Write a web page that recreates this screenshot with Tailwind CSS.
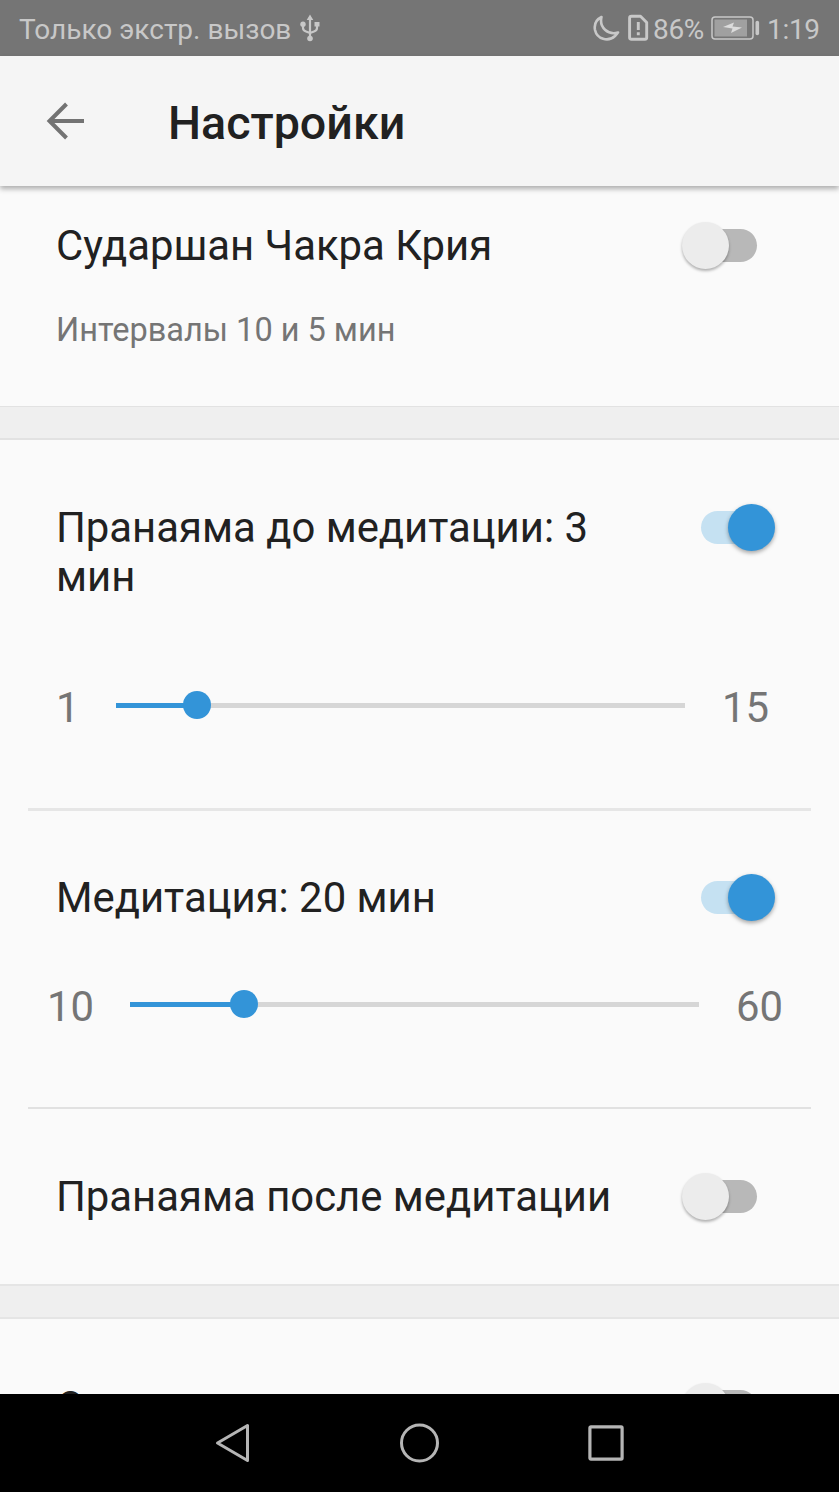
<!DOCTYPE html>
<html lang="ru">
<head>
    <meta charset="UTF-8">
    <meta name="viewport" content="width=device-width, initial-scale=1.0">
    <script src="https://cdn.jsdelivr.net/npm/@tailwindcss/browser@4"></script>
    <title>Настройки</title>
</head>
<body class="bg-black">
    <div class="w-[839px] h-[1492px] flex flex-col overflow-hidden bg-[#fafafa] font-['Roboto','Liberation_Sans',sans-serif] text-[41.85px] leading-[49px] text-[#212121]">

        <!-- Status bar -->
        <div class="h-14 shrink-0 flex items-center bg-[#757575] pl-[19px] pr-[19px] text-[28px] leading-8 text-[#c8c8c8]">
            <span class="w-[273px] pt-[3px] whitespace-nowrap">Только экстр. вызов</span>
            <svg class="w-[20px] h-[28px] ml-[8px]" viewBox="0 0 20 28" fill="none" stroke="currentColor" stroke-width="2.2">
                <path d="M10 4v20M3 10v4q0 2.500 3 3.500l4 1.500M17 10v4q0 2.500-3 3.500l-4 1.500"/>
                <path d="M10 .5l3.300 5.500H6.700zM14.500 8h5v4.500h-5z" fill="currentColor" stroke="none"/>
                <circle cx="3" cy="10.300" r="2.700" fill="currentColor" stroke="none"/>
                <circle cx="10" cy="24.500" r="2.800" fill="currentColor" stroke="none"/>
            </svg>
            <div class="ml-auto flex items-center">
                <svg class="w-[28px] h-[28px]" viewBox="0 0 28 28" fill="none" stroke="currentColor" stroke-width="2.600" stroke-linejoin="round">
                    <path d="M8.500 3C3.500 5.500 1 10.500 2 16C4 25 15 28.500 22 22C23.500 20.500 24.500 19.500 25 18.500C15 21.500 6 13.500 8.500 3Z"/>
                </svg>
                <svg class="w-[21px] h-[28px] ml-[7px]" viewBox="0 0 21 28" fill="none" stroke="currentColor" stroke-width="2.900" stroke-linejoin="round">
                    <path d="M3.500 2.300H12.500L18.700 8.500V23.500Q18.700 25.200 17 25.200H3.500Q1.600 25.200 1.600 23.500V4Q1.600 2.300 3.500 2.300Z"/>
                    <path d="M10.300 8v8M10.300 18.300v3"/>
                </svg>
                <span class="w-[51px] ml-[4px] pt-[3px] whitespace-nowrap tracking-[-0.3px]">86%</span>
                <svg class="w-[49px] h-[24px] ml-[7px]" viewBox="0 0 49 24">
                    <rect x="1" y="1" width="41" height="22" rx="3" fill="none" stroke="#c8c8c8" stroke-width="1.500"/>
                    <rect x="3.500" y="3.500" width="32.500" height="17" fill="#a0a0a0"/>
                    <path d="M12 11l11-4.500-1.500 4 9.500 1-11 5.500 1.500-4.500z" fill="#dcdcdc"/>
                    <path d="M46.300 6.500v11" stroke="#c8c8c8" stroke-width="3.600" stroke-linecap="round"/>
                </svg>
                <span class="w-[53px] ml-[7px] pt-[3px] whitespace-nowrap tracking-[-0.3px]">1:19</span>
            </div>
        </div>

        <!-- App bar -->
        <div class="relative h-[130px] shrink-0 flex items-center bg-[#f5f5f5] pl-[46px] shadow-[0_3px_5px_rgba(0,0,0,0.3)]">
            <svg class="w-[38px] h-[38px]" viewBox="0 0 38 38" fill="none" stroke="#737373" stroke-width="4">
                <path d="M38 19H4M20.500 2L3.500 19L20.500 36"/>
            </svg>
            <h1 class="ml-[84px] pt-[3px] text-[46.600px] leading-[54px] font-medium">Настройки</h1>
        </div>

        <!-- Sudarshan Kriya -->
        <section class="h-[220px] shrink-0 pt-[35px] pl-14 pr-16">
            <div class="flex justify-between">
                <h2>Сударшан Чакра Крия</h2>
                <div class="relative w-[93px] h-[49px] flex items-center justify-center">
                    <div class="w-14 h-[33px] rounded-full bg-[#b8b8b8]"></div>
                    <div class="absolute left-0 top-px size-[47px] rounded-full bg-[#ececec] shadow-[0_2px_3px_rgba(0,0,0,0.3)]"></div>
                </div>
            </div>
            <p class="mt-[41px] text-[32.500px] leading-[38px] text-[#757575]">Интервалы 10 и 5 мин</p>
        </section>

        <div class="h-[34px] shrink-0 bg-[#efefef] border-t border-b-2 border-[#e2e2e2]"></div>

        <!-- Meditation -->
        <section class="h-[844px] shrink-0">
            <div class="h-[368px] pt-[63px]">
                <div class="flex justify-between pl-14 pr-16">
                    <h2 class="w-[560px]">Пранаяма до медитации: 3 мин</h2>
                    <div class="relative w-[93px] h-[49px] flex items-center justify-center">
                        <div class="w-14 h-[33px] rounded-full bg-[#c5e1f2]"></div>
                        <div class="absolute right-0 top-px size-[47px] rounded-full bg-[#3394d8] shadow-[0_2px_4px_rgba(0,0,0,0.35)]"></div>
                    </div>
                </div>
                <div class="mt-[82px] h-[49px] flex items-center pl-14 text-[#757575]">
                    <span class="w-[60px]">1</span>
                    <div class="relative -mt-[5px] w-[569px] h-[5px] bg-[#d6d6d6]">
                        <div class="h-full bg-[#3394d8]" style="width: 14.3%"></div>
                        <div class="absolute -top-[12px] -translate-x-1/2 size-7 rounded-full bg-[#3394d8]" style="left: 14.3%"></div>
                    </div>
                    <span class="pl-[37px]">15</span>
                </div>
            </div>
            <div class="mx-7 h-[3px] bg-[#e6e6e6]"></div>
            <div class="h-[296px] pt-[62px]">
                <div class="flex justify-between pl-14 pr-16">
                    <h2>Медитация: 20 мин</h2>
                    <div class="relative w-[93px] h-[49px] flex items-center justify-center">
                        <div class="w-14 h-[33px] rounded-full bg-[#c5e1f2]"></div>
                        <div class="absolute right-0 top-px size-[47px] rounded-full bg-[#3394d8] shadow-[0_2px_4px_rgba(0,0,0,0.35)]"></div>
                    </div>
                </div>
                <div class="mt-[60px] h-[49px] flex items-center pl-[47px] text-[#757575]">
                    <span class="w-[83px]">10</span>
                    <div class="relative -mt-[5px] w-[569px] h-[5px] bg-[#d6d6d6]">
                        <div class="h-full bg-[#3394d8]" style="width: 20%"></div>
                        <div class="absolute -top-[12px] -translate-x-1/2 size-7 rounded-full bg-[#3394d8]" style="left: 20%"></div>
                    </div>
                    <span class="pl-[37px]">60</span>
                </div>
            </div>
            <div class="mx-7 h-[2px] bg-[#e1e1e1]"></div>
            <div class="pt-[63px] pl-14 pr-16 flex justify-between">
                <h2>Пранаяма после медитации</h2>
                <div class="relative w-[93px] h-[49px] flex items-center justify-center">
                    <div class="w-14 h-[33px] rounded-full bg-[#b8b8b8]"></div>
                    <div class="absolute left-0 top-px size-[47px] rounded-full bg-[#ececec] shadow-[0_2px_3px_rgba(0,0,0,0.3)]"></div>
                </div>
            </div>
        </section>

        <div class="h-[35px] shrink-0 bg-[#efefef] border-y-2 border-[#e5e5e5]"></div>

        <!-- Next setting, scrolled under the navigation bar -->
        <section class="h-[75px] shrink-0 overflow-hidden pt-[63px] pl-14 pr-16 flex justify-between">
            <h2>О</h2>
            <div class="relative w-[93px] h-[49px] shrink-0 flex items-center justify-center">
                <div class="w-14 h-[33px] rounded-full bg-[#b8b8b8]"></div>
                <div class="absolute left-0 top-px size-[47px] rounded-full bg-[#ececec] shadow-[0_2px_3px_rgba(0,0,0,0.3)]"></div>
            </div>
        </section>

        <!-- Navigation bar -->
        <nav class="h-[98px] shrink-0 bg-black flex items-center pl-[215px]">
            <svg class="w-[36px] h-[40px]" viewBox="0 0 36 40" fill="none" stroke="#b5b5b5" stroke-width="3" stroke-linejoin="round">
                <path d="M32.500 2.500V37.500L2.500 20Z"/>
            </svg>
            <svg class="w-[40px] h-[40px] ml-[148px]" viewBox="0 0 40 40" fill="none" stroke="#b5b5b5" stroke-width="3">
                <circle cx="20.500" cy="20" r="18"/>
            </svg>
            <svg class="w-[36px] h-[36px] ml-[149px]" viewBox="0 0 36 36" fill="none" stroke="#b5b5b5" stroke-width="3.200" stroke-linejoin="round">
                <rect x="1.900" y="1.900" width="32.200" height="32.200" rx="1"/>
            </svg>
        </nav>
    </div>
</body>
</html>
